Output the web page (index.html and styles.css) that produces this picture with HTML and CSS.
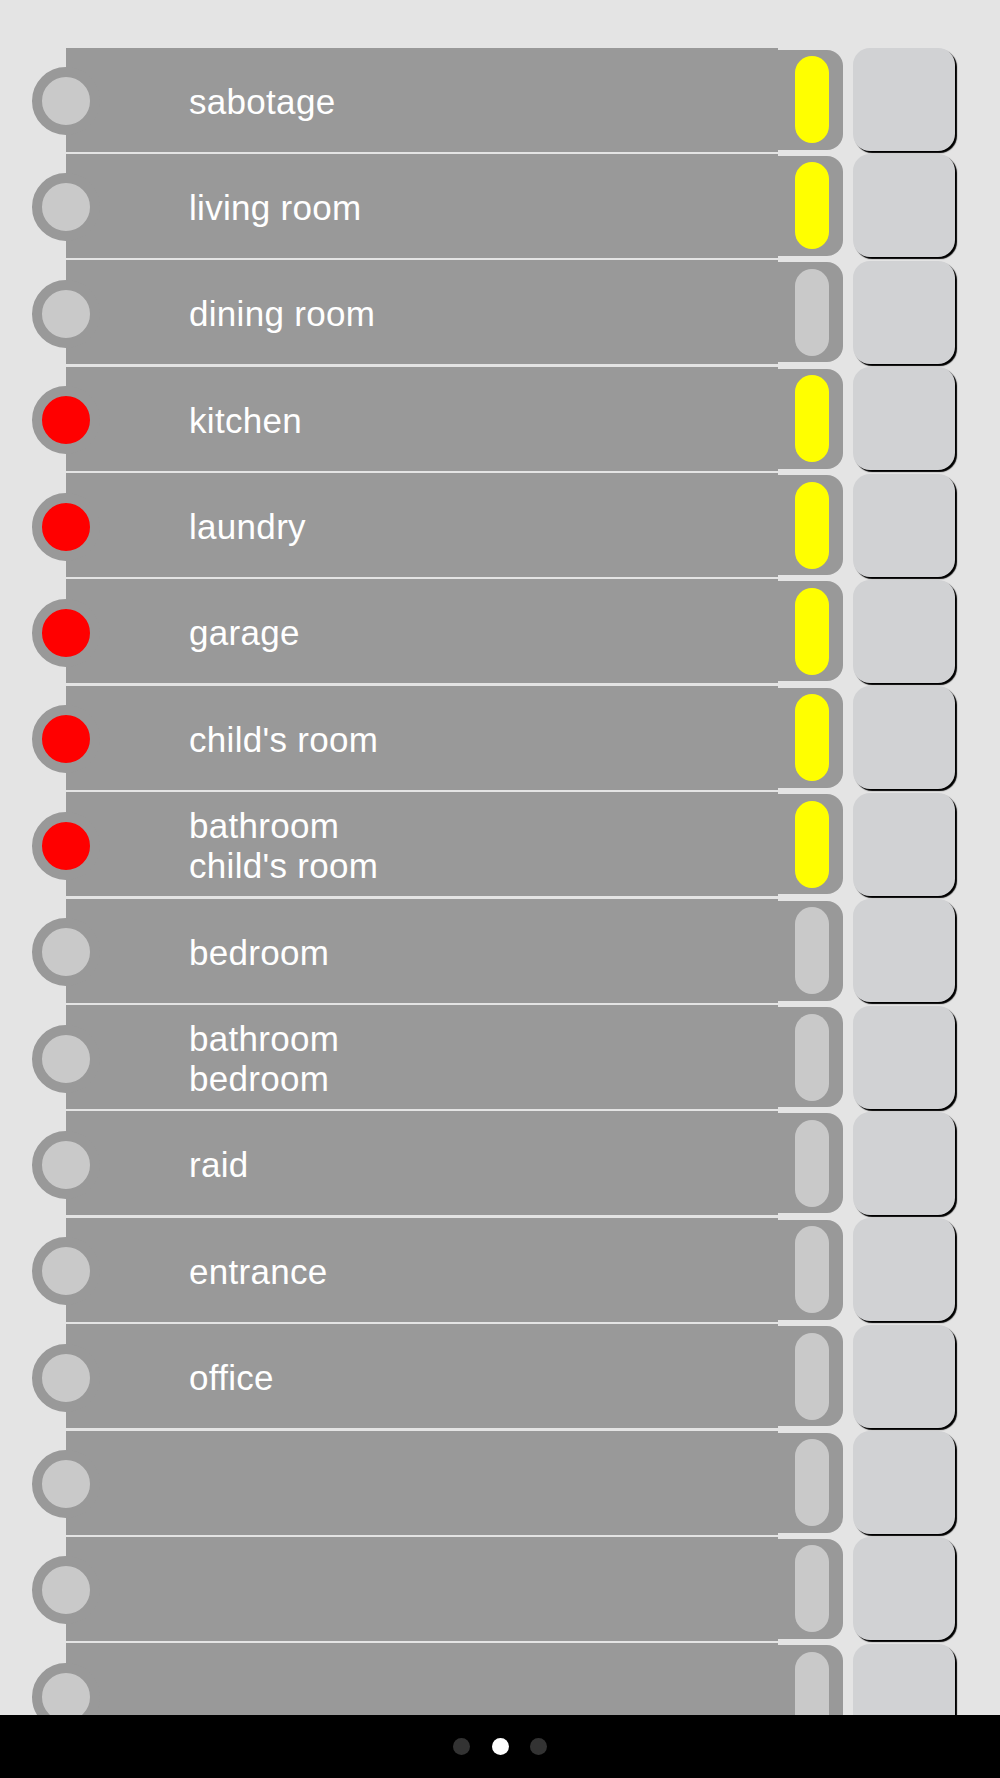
FILE: index.html
```html
<!DOCTYPE html>
<html lang="en">
<head>
    <meta charset="UTF-8">
    <meta name="viewport" content="width=device-width, initial-scale=1.0">
    <title>Zones</title>
    <link rel="stylesheet" href="styles.css">
</head>
<body>

    <main class="zones">
        <div class="zone">
            <span class="led"></span>
            <div class="bar"><span class="label">sabotage</span></div>
            <div class="switch"><span class="pill on"></span></div>
            <button class="key"></button>
        </div>
        <div class="zone">
            <span class="led"></span>
            <div class="bar"><span class="label">living room</span></div>
            <div class="switch"><span class="pill on"></span></div>
            <button class="key"></button>
        </div>
        <div class="zone">
            <span class="led"></span>
            <div class="bar"><span class="label">dining room</span></div>
            <div class="switch"><span class="pill"></span></div>
            <button class="key"></button>
        </div>
        <div class="zone">
            <span class="led alarm"></span>
            <div class="bar"><span class="label">kitchen</span></div>
            <div class="switch"><span class="pill on"></span></div>
            <button class="key"></button>
        </div>
        <div class="zone">
            <span class="led alarm"></span>
            <div class="bar"><span class="label">laundry</span></div>
            <div class="switch"><span class="pill on"></span></div>
            <button class="key"></button>
        </div>
        <div class="zone">
            <span class="led alarm"></span>
            <div class="bar"><span class="label">garage</span></div>
            <div class="switch"><span class="pill on"></span></div>
            <button class="key"></button>
        </div>
        <div class="zone">
            <span class="led alarm"></span>
            <div class="bar"><span class="label">child's room</span></div>
            <div class="switch"><span class="pill on"></span></div>
            <button class="key"></button>
        </div>
        <div class="zone">
            <span class="led alarm"></span>
            <div class="bar"><span class="label">bathroom<br>child's room</span></div>
            <div class="switch"><span class="pill on"></span></div>
            <button class="key"></button>
        </div>
        <div class="zone">
            <span class="led"></span>
            <div class="bar"><span class="label">bedroom</span></div>
            <div class="switch"><span class="pill"></span></div>
            <button class="key"></button>
        </div>
        <div class="zone">
            <span class="led"></span>
            <div class="bar"><span class="label">bathroom<br>bedroom</span></div>
            <div class="switch"><span class="pill"></span></div>
            <button class="key"></button>
        </div>
        <div class="zone">
            <span class="led"></span>
            <div class="bar"><span class="label">raid</span></div>
            <div class="switch"><span class="pill"></span></div>
            <button class="key"></button>
        </div>
        <div class="zone">
            <span class="led"></span>
            <div class="bar"><span class="label">entrance</span></div>
            <div class="switch"><span class="pill"></span></div>
            <button class="key"></button>
        </div>
        <div class="zone">
            <span class="led"></span>
            <div class="bar"><span class="label">office</span></div>
            <div class="switch"><span class="pill"></span></div>
            <button class="key"></button>
        </div>
        <div class="zone">
            <span class="led"></span>
            <div class="bar"><span class="label"></span></div>
            <div class="switch"><span class="pill"></span></div>
            <button class="key"></button>
        </div>
        <div class="zone">
            <span class="led"></span>
            <div class="bar"><span class="label"></span></div>
            <div class="switch"><span class="pill"></span></div>
            <button class="key"></button>
        </div>
        <div class="zone">
            <span class="led"></span>
            <div class="bar"><span class="label"></span></div>
            <div class="switch"><span class="pill"></span></div>
            <button class="key"></button>
        </div>
    </main>

    <footer class="pager">
        <span class="dot"></span>
        <span class="dot active"></span>
        <span class="dot"></span>
    </footer>

</body>
</html>
```

FILE: styles.css
```css
body {
    margin: 0;
    padding: 0;
    height: 1778px;
    display: flex;
    flex-direction: column;
    background-color: #e4e4e4;
    font-family: "Liberation Sans", Arial, sans-serif;
}

.zones {
    flex: 1;
    overflow: hidden;
    padding: 47.5px 0 0 32px;
}

.zone {
    display: flex;
    align-items: center;
    height: 104px;
    margin-bottom: 2.4px;
}

.led {
    position: relative;
    z-index: 1;
    flex: none;
    width: 48px;
    height: 48px;
    margin-top: 3px;
    border: 10px solid #999999;
    border-radius: 50%;
    background-color: #c9c9c9;
}

.led.alarm {
    background-color: #ff0000;
}

.bar {
    flex: none;
    display: flex;
    align-items: center;
    width: 711.5px;
    height: 104px;
    margin-left: -34px;
    padding: 4px 0 0 123px;
    box-sizing: border-box;
    background-color: #999999;
}

.label {
    color: white;
    font-size: 35px;
    line-height: 40px;
    letter-spacing: 0.3px;
}

.switch {
    flex: none;
    display: flex;
    align-items: center;
    justify-content: flex-end;
    width: 80px;
    height: 100px;
    margin-left: -15px;
    padding-right: 14px;
    box-sizing: border-box;
    background-color: #999999;
    border-radius: 0 16px 16px 0;
}

.pill {
    width: 34px;
    height: 87px;
    border-radius: 17px;
    background-color: #c9c9c9;
}

.pill.on {
    background-color: #ffff00;
}

.key {
    flex: none;
    width: 102px;
    height: 103px;
    margin-left: 10px;
    padding: 0;
    border: none;
    border-radius: 17px;
    background-color: #d1d2d4;
    box-shadow: 2px 2px 1px #000;
}

.pager {
    flex: none;
    height: 63px;
    display: flex;
    align-items: center;
    justify-content: center;
    gap: 21.5px;
    background-color: black;
}

.dot {
    width: 17px;
    height: 17px;
    border-radius: 50%;
    background-color: #333333;
}

.dot.active {
    background-color: white;
}
```
